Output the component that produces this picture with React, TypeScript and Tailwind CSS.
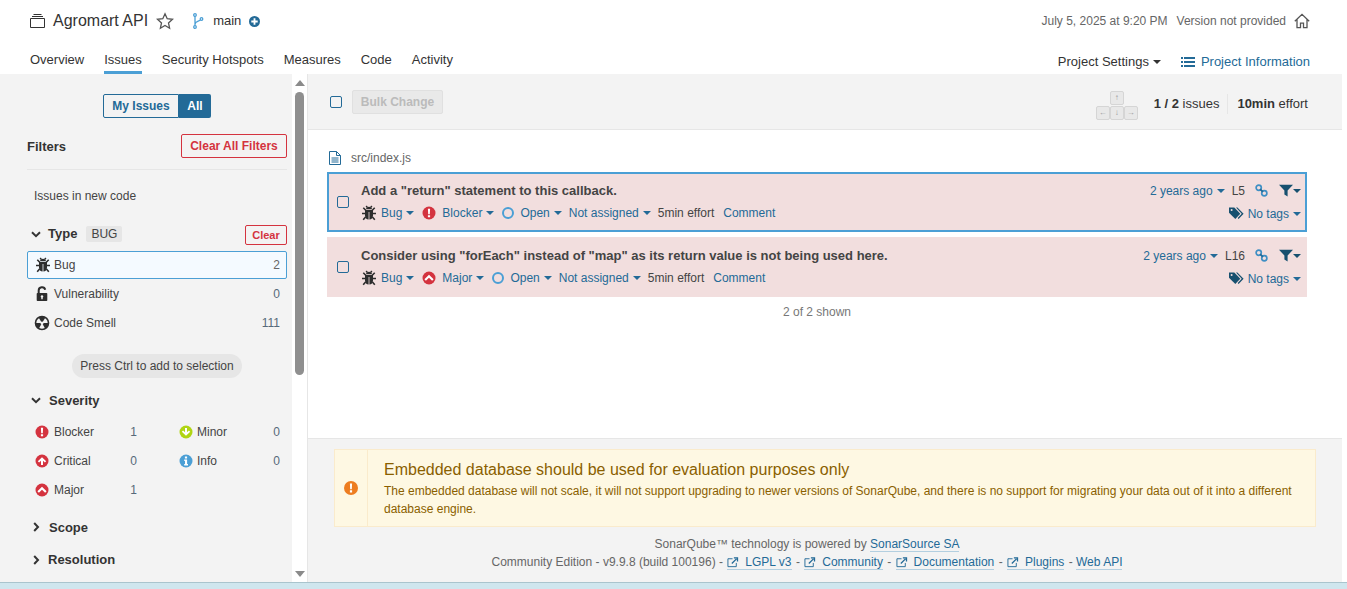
import React from 'react';

const BLUE = '#236a97';

function BugIcon() {
  return (
    <svg viewBox="0 0 16 16" className="w-4 h-4 shrink-0" fill="#2d2d2d">
      <path d="M5 4.2C5.3 2.6 6.500 1.800 8 1.800s2.700.8 3 2.400z" />
      <path d="M4 5h8v5.400c0 2.400-1.600 4-3.600 4.200V7h-.8v7.600C5.600 14.400 4 12.800 4 10.400z" />
      <path d="M2.300 2.800l2.400 2.500M13.700 2.800l-2.400 2.500M1 8.500h3M15 8.500h-3M2.200 14.800l2.400-2.800M13.800 14.800L11.400 12M5.200 1l1 1.400M10.800 1l-1 1.400" stroke="#2d2d2d" strokeWidth="1.600" fill="none" />
    </svg>
  );
}

function LockIcon() {
  return (
    <svg viewBox="0 0 16 16" className="w-4 h-4 shrink-0" fill="#2d2d2d">
      <path d="M3.500 7h9a.8.8 0 0 1 .8.8v6.400a.8.8 0 0 1-.8.8h-9a.8.8 0 0 1-.8-.8V7.800a.8.8 0 0 1 .8-.8zm4.500 2.200a1.300 1.300 0 0 0-.7 2.400v1.700h1.400v-1.700A1.300 1.300 0 0 0 8 9.200z" fillRule="evenodd" />
      <path d="M4.700 7V4.600a3.300 3.300 0 0 1 6.500-.9" stroke="#2d2d2d" strokeWidth="2" fill="none" />
    </svg>
  );
}

function SmellIcon() {
  return (
    <svg viewBox="0 0 16 16" className="w-4 h-4 shrink-0">
      <circle cx="8" cy="8" r="6.500" fill="none" stroke="#2d2d2d" strokeWidth="1.600" />
      <path d="M8 8L4.600 2.600A6.300 6.300 0 0 1 11.400 2.600z" fill="#2d2d2d" />
      <path d="M8 8h6.300a6.300 6.300 0 0 1-3.200 5.500z" fill="#2d2d2d" />
      <path d="M8 8H1.700a6.300 6.300 0 0 0 3.200 5.500z" fill="#2d2d2d" />
      <circle cx="8" cy="8" r="1.500" fill="#f3f3f3" />
    </svg>
  );
}

function SeverityIcon({ kind }: { kind: string }) {
  const color = kind === 'minor' ? '#b0d513' : kind === 'info' ? '#4b9fd5' : '#d4333f';
  return (
    <svg viewBox="0 0 14 14" className="w-[14px] h-[14px] shrink-0">
      <circle cx="7" cy="7" r="6.500" fill={color} />
      {kind === 'blocker' && <path d="M5.900 2.800h2.200l-.3 5.400H6.200zM5.900 9.200h2.200v2H5.900z" fill="#fff" />}
      {kind === 'critical' && <path d="M7 3.200l4.200 4.100-1.300 1.300-1.900-1.800v4.200H6V6.800L4.100 8.600 2.800 7.300z" fill="#fff" />}
      {kind === 'major' && <path d="M7 3.800l4.600 4.400-1.500 1.500L7 6.800 3.900 9.700 2.400 8.200z" fill="#fff" />}
      {kind === 'minor' && <path d="M7 10.800L2.800 6.700l1.300-1.300L6 7.200V3h2v4.200l1.900-1.800 1.300 1.300z" fill="#fff" />}
      {kind === 'info' && <path d="M5.900 2.600h2.200v2H5.900zM5.200 5.600h2.900v4.400h.9v1.400H5.200V10h.8V7H5.200z" fill="#fff" />}
    </svg>
  );
}

function Caret({ color = 'currentColor', className = 'ml-1' }: { color?: string; className?: string }) {
  return (
    <svg viewBox="0 0 8 4" className={`w-2 h-1 shrink-0 ${className}`}>
      <path d="M0 0h8L4 4z" fill={color} />
    </svg>
  );
}

function ChevronDown() {
  return (
    <svg viewBox="0 0 10 7" className="w-[10px] h-[7px] shrink-0">
      <path d="M1 1.300l4 3.800 4-3.800" fill="none" stroke="#333" strokeWidth="2" />
    </svg>
  );
}

function ChevronRight() {
  return (
    <svg viewBox="0 0 7 10" className="w-[7px] h-[10px] shrink-0">
      <path d="M1.200 1l3.800 4-3.800 4" fill="none" stroke="#333" strokeWidth="2" />
    </svg>
  );
}

function Checkbox() {
  return <div className="w-3 h-3 shrink-0 rounded-[2px] border border-[#236a97] bg-transparent" />;
}

function ExternalIcon() {
  return (
    <svg viewBox="0 0 14 12" className="w-[13px] h-[12px] mr-[5px] inline-block align-[-2px]">
      <path d="M6 2.500H1v8.500h9V7" fill="none" stroke="#236a97" strokeWidth="1" />
      <path d="M5.200 7.600l5-5M7.400 1.600h3.900v3.900" fill="none" stroke="#236a97" strokeWidth="1.400" />
    </svg>
  );
}

function FacetHeader({ title, open = true, gap = 'gap-[7px]' }: { title: string; open?: boolean; gap?: string }) {
  return (
    <div className={`flex items-center ${gap} text-[13px] font-bold text-[#333]`}>
      <div className="w-[14px] pl-[4px] flex justify-center">{open ? <ChevronDown /> : <ChevronRight />}</div>
      <span>{title}</span>
    </div>
  );
}

function FacetRow({ icon, label, count, iconClass = '' }: { icon: React.ReactNode; label: string; count: string; iconClass?: string }) {
  return (
    <div className="h-[29px] flex items-center pl-[7px] pr-[7px]">
      <div className={`w-[20px] flex items-center ${iconClass}`}>{icon}</div>
      <span className="text-xs text-[#444]">{label}</span>
      <span className="ml-auto text-xs text-[#56697a]">{count}</span>
    </div>
  );
}

function Sidebar() {
  return (
    <div className="w-[292px] shrink-0 bg-[#f3f3f3] pl-[27px] pr-[5px] overflow-hidden">
      <div className="flex justify-center pt-5">
        <div className="flex text-xs font-bold h-6">
          <div className="w-[76px] flex items-center justify-center border border-[#236a97] rounded-l-[2px] text-[#236a97]">My Issues</div>
          <div className="w-[32px] flex items-center justify-center bg-[#236a97] rounded-r-[2px] text-white">All</div>
        </div>
      </div>
      <div className="mt-4 flex items-center justify-between pb-[11px] border-b border-[#e6e6e6]">
        <span className="text-[13px] font-bold text-[#333] mt-px">Filters</span>
        <div className="w-[106px] h-6 flex items-center justify-center border border-[#d4333f] rounded-[2px] text-xs font-semibold text-[#d4333f]">Clear All Filters</div>
      </div>
      <div className="mt-[18px] pl-[7px] text-xs text-[#444]">Issues in new code</div>
      <div className="mt-[21px] flex items-center justify-between h-5">
        <div className="flex items-center -mt-[2px]">
          <FacetHeader title="Type" />
          <span className="ml-[9px] h-4 px-[5px] flex items-center rounded-[2px] bg-[#e6e6e6] text-xs text-[#444]">BUG</span>
        </div>
        <div className="w-[42px] h-5 flex items-center justify-center border border-[#d4333f] rounded-[2px] text-[11px] font-semibold text-[#d4333f]">Clear</div>
      </div>
      <div className="mt-[6px] border border-[#4b9fd5] rounded-[2px] bg-[#f4faff]">
        <div className="h-[26px] flex items-center pl-[7px] pr-[6px]">
          <div className="w-[19px] flex items-center"><BugIcon /></div>
          <span className="text-xs text-[#444]">Bug</span>
          <span className="ml-auto text-xs text-[#666]">2</span>
        </div>
      </div>
      <div>
        <FacetRow icon={<LockIcon />} label="Vulnerability" count="0" />
        <FacetRow icon={<SmellIcon />} label="Code Smell" count="111" />
      </div>
      <div className="mt-[17px] flex justify-center">
        <div className="w-[170px] h-6 flex items-center justify-center rounded-full bg-[#e6e6e6] text-xs text-[#444]">Press Ctrl to add to selection</div>
      </div>
      <div className="mt-[13px]">
        <FacetHeader title="Severity" gap="gap-2" />
      </div>
      <div className="mt-[7px] grid grid-cols-[117px_1fr] gap-x-[26px]">
        <div>
          <FacetRow icon={<SeverityIcon kind="blocker" />} label="Blocker" count="1" iconClass="pl-px" />
          <FacetRow icon={<SeverityIcon kind="critical" />} label="Critical" count="0" iconClass="pl-px" />
          <FacetRow icon={<SeverityIcon kind="major" />} label="Major" count="1" iconClass="pl-px" />
        </div>
        <div>
          <FacetRow icon={<SeverityIcon kind="minor" />} label="Minor" count="0" iconClass="pl-[2px]" />
          <FacetRow icon={<SeverityIcon kind="info" />} label="Info" count="0" iconClass="pl-[2px]" />
        </div>
      </div>
      <div className="mt-[13px]">
        <FacetHeader title="Scope" open={false} gap="gap-2" />
      </div>
      <div className="mt-[13px]">
        <FacetHeader title="Resolution" open={false} />
      </div>
    </div>
  );
}

function SideScroll() {
  return (
    <div className="w-[16px] shrink-0 flex bg-white">
      <div className="w-[15px] flex flex-col items-center pt-[6px] pb-[5px]">
        <div className="w-0 h-0 border-x-[5px] border-x-transparent border-b-[6px] border-b-[#8a8a8a]" />
        <div className="mt-[6px] w-[9px] h-[283px] rounded-[5px] bg-[#8f8f8f]" />
        <div className="mt-auto w-0 h-0 border-x-[5px] border-x-transparent border-t-[6px] border-t-[#8a8a8a]" />
      </div>
      <div className="w-px bg-[#e6e6e6]" />
    </div>
  );
}

function Key({ children }: { children: string }) {
  return (
    <div className="w-[14px] h-[14px] flex items-center justify-center bg-[#e8e8e8] border border-[#d5d5d5] rounded-[2px] text-[8px] text-[#999]">{children}</div>
  );
}

function Toolbar() {
  return (
    <div className="h-[56px] shrink-0 bg-[#f3f3f3] border-b border-[#e6e6e6] flex items-center pl-[22px] pr-[34px]">
      <Checkbox />
      <div className="ml-[10px] mt-px w-[91px] h-6 flex items-center justify-center bg-[#e9e9e9] border border-[#e0e0e0] rounded-[2px] text-xs font-bold text-[#bbb]">Bulk Change</div>
      <div className="ml-auto mt-[7px] flex flex-col items-center gap-px">
        <Key>↑</Key>
        <div className="flex">
          <Key>←</Key>
          <Key>↓</Key>
          <Key>→</Key>
        </div>
      </div>
      <div className="ml-4 mt-1 text-[13px] text-[#333] whitespace-nowrap"><b>1 / 2</b> issues</div>
      <div className="ml-2 mt-1 h-5 w-px bg-[#e6e6e6]" />
      <div className="ml-[9px] mt-1 text-[13px] text-[#333] whitespace-nowrap"><b>10min</b> effort</div>
    </div>
  );
}

function LinkIcon() {
  return (
    <svg viewBox="0 0 14 14" className="w-[13px] h-[13px] shrink-0">
      <circle cx="4" cy="4" r="2.800" fill="none" stroke="#3f8fc4" strokeWidth="1.800" />
      <circle cx="10" cy="10" r="2.800" fill="none" stroke="#3f8fc4" strokeWidth="1.800" />
      <path d="M5.500 5.500l3 3" stroke="#236a97" strokeWidth="1.800" />
    </svg>
  );
}

function FilterIcon() {
  return (
    <svg viewBox="0 0 14 13" className="w-[14px] h-[13px] shrink-0">
      <path d="M0 .8h14L8.600 6.500v6L5.400 10.500v-4z" fill="#17506f" />
    </svg>
  );
}

function TagIcon() {
  return (
    <svg viewBox="0 0 15 13" className="w-[15px] h-[13px] shrink-0">
      <path d="M0 .5h5.300l6 6.300-5 5.200L0 5.800z" fill="#17506f" />
      <path d="M7 .5h1.400l6.200 6.300-5 5.200-.9-.9 4-4.300z" fill="#17506f" />
      <circle cx="2.600" cy="3" r="1" fill="#f2dede" />
    </svg>
  );
}

function Issue({ title, severity, sevLabel, line, selected }: { title: string; severity: React.ReactNode; sevLabel: string; line: string; selected?: boolean }) {
  return (
    <div className={`h-[60px] bg-[#f2dede] flex items-center ${selected ? 'border-2 border-[#4b9fd5] pl-2 pr-1' : 'pl-[10px] pr-[6px]'}`}>
      <Checkbox />
      <div className="ml-3 flex-1 min-w-0">
        <div className="text-[13px] font-bold text-[#444] leading-4">{title}</div>
        <div className="mt-[6px] flex items-center text-xs text-[#236a97] leading-4">
          <BugIcon />
          <span className="ml-[4px]">Bug</span>
          <Caret color={BLUE} />
          <div className="ml-[8px] flex items-center">{severity}</div>
          <span className="ml-[6px]">{sevLabel}</span>
          <Caret color={BLUE} />
          <div className="ml-[8px] w-3 h-3 rounded-full border-2 border-[#4b9fd5]" />
          <span className="ml-[6px]">Open</span>
          <Caret color={BLUE} />
          <span className="ml-[7px]">Not assigned</span>
          <Caret color={BLUE} />
          <span className="ml-[7px] text-[#444]">5min effort</span>
          <span className="ml-[9px]">Comment</span>
        </div>
      </div>
      <div className="shrink-0 flex flex-col items-end">
        <div className="flex items-center h-4 text-xs text-[#236a97]">
          <span>2 years ago</span>
          <Caret color={BLUE} />
          <span className="ml-[7px] text-[#444]">{line}</span>
          <div className="ml-[10px]"><LinkIcon /></div>
          <div className="ml-[11px] flex items-center"><FilterIcon /><Caret color="#17506f" className="ml-0" /></div>
        </div>
        <div className="mt-[7px] flex items-center h-4 text-xs text-[#236a97]">
          <TagIcon />
          <span className="ml-[4px]">No tags</span>
          <Caret color={BLUE} />
        </div>
      </div>
    </div>
  );
}

function FooterLink({ children, external }: { children: string; external?: boolean }) {
  return (
    <span className={`border-b border-[#b3cfe0] text-[#236a97] ${external ? 'mx-px' : ''}`}>
      {external && <ExternalIcon />}
      {children}
    </span>
  );
}

function Footer() {
  return (
    <div className="h-[144px] shrink-0 bg-[#f3f3f3] border-t border-[#e6e6e6] pt-[10px] pl-[26px] pr-[26px]">
      <div className="h-[78px] flex bg-[#fef8e3] border border-[#faebcc]">
        <div className="w-[33px] shrink-0 flex items-center justify-center border-r border-[#faebcc]">
          <svg viewBox="0 0 14 14" className="w-[14px] h-[14px]">
            <circle cx="7" cy="7" r="7" fill="#ed7d20" />
            <path d="M5.900 2.600h2.200l-.3 5.600H6.200zM5.900 9.200h2.200v2.200H5.900z" fill="#fff" />
          </svg>
        </div>
        <div className="pl-4 pr-4 pt-[10px] text-[#8a5f00]">
          <div className="text-base leading-[20px]">Embedded database should be used for evaluation purposes only</div>
          <div className="mt-[2px] text-xs leading-[18px]">
            The embedded database will not scale, it will not support upgrading to newer versions of SonarQube, and there is no support for migrating your data out of it into a different database engine.
          </div>
        </div>
      </div>
      <div className="mt-[8px] pr-[36px] text-center text-xs leading-[18px] text-[#666]">
        <div>SonarQube™ technology is powered by <FooterLink>SonarSource SA</FooterLink></div>
        <div>
          Community Edition - v9.9.8 (build 100196) - <FooterLink external>LGPL v3</FooterLink> - <FooterLink external>Community</FooterLink> - <FooterLink external>Documentation</FooterLink> - <FooterLink external>Plugins</FooterLink> - <FooterLink>Web API</FooterLink>
        </div>
      </div>
    </div>
  );
}

export default function App() {
  return (
    <div className="h-[589px] overflow-hidden bg-white flex flex-col font-['Liberation_Sans',Arial,sans-serif]">
      {/* шапка проекта */}
      <div className="h-[74px] shrink-0 flex flex-col pl-[30px] pr-[37px]">
        <div className="flex items-center h-[42px]">
          <svg viewBox="0 0 15 14" className="w-[15px] h-[14px] shrink-0" fill="none" stroke="#333" strokeWidth="1">
            <path d="M.5 4.500h14v9H.500zM2 2.500h11M3.500.5h8" />
          </svg>
          <span className="ml-2 text-base text-[#333]">Agromart API</span>
          <svg viewBox="0 0 18 18" className="ml-2 w-[18px] h-[18px] shrink-0" fill="none" stroke="#555" strokeWidth="1.300">
            <path d="M9 1.800l2.200 4.900 5.300.6-4 3.600 1.100 5.300L9 13.500l-4.600 2.700 1.100-5.300-4-3.600 5.300-.6z" />
          </svg>
          <svg viewBox="0 0 12 16" className="ml-[18px] w-3 h-4 shrink-0" fill="none" stroke="#4b9fd5" strokeWidth="1.300">
            <circle cx="3" cy="2" r="1.300" />
            <circle cx="3" cy="14" r="1.300" />
            <circle cx="9.500" cy="6" r="1.300" />
            <path d="M3 3.300v9.400M8.500 7C6.500 8.500 3.500 8.500 3 11" />
          </svg>
          <span className="ml-[9px] text-[13px] text-[#333]">main</span>
          <svg viewBox="0 0 12 12" className="ml-[8px] w-[11px] h-[11px] shrink-0">
            <circle cx="6" cy="6" r="6" fill="#236a97" />
            <path d="M5 2.500h2V5h2.500v2H7v2.500H5V7H2.500V5H5z" fill="#fff" />
          </svg>
          <span className="ml-auto text-xs text-[#666]">July 5, 2025 at 9:20 PM</span>
          <span className="ml-[9px] text-xs text-[#666]">Version not provided</span>
          <svg viewBox="0 0 16 16" className="ml-[8px] w-4 h-4 shrink-0" fill="none" stroke="#555" strokeWidth="1.300">
            <path d="M.8 8.200L8 1.300l7.200 6.900M3 6.500v8.200h3.500v-4.500h3v4.500H13V6.500" />
          </svg>
        </div>
        <div className="flex items-start flex-1 text-[13px] text-[#333]">
          <div className="pt-[10px] leading-[15px]">Overview</div>
          <div className="ml-5 h-full border-b-[3px] border-[#4b9fd5] pt-[10px] leading-[15px]">Issues</div>
          <div className="ml-5 pt-[10px] leading-[15px]">Security Hotspots</div>
          <div className="ml-5 pt-[10px] leading-[15px]">Measures</div>
          <div className="ml-5 pt-[10px] leading-[15px]">Code</div>
          <div className="ml-5 pt-[10px] leading-[15px]">Activity</div>
          <div className="ml-auto flex items-center pt-3 leading-[15px]">
            <span>Project Settings</span>
            <Caret color="#333" />
            <svg viewBox="0 0 14 12" className="ml-[20px] w-[14px] h-3 shrink-0" fill={BLUE}>
              <path d="M0 1h2v2H0zM3 1h11v2H3zM0 5h2v2H0zM3 5h11v2H3zM0 9h2v2H0zM3 9h11v2H3z" />
            </svg>
            <span className="ml-[6px] text-[#236a97]">Project Information</span>
          </div>
        </div>
      </div>
      {/* основная часть */}
      <div className="flex-1 min-h-0 flex">
        <Sidebar />
        <SideScroll />
        <div className="flex-1 min-w-0 flex flex-col">
          <Toolbar />
          <div className="flex-1 min-h-0 pl-[19px] pr-[35px] pt-[20px]">
            <div className="flex items-center h-4 pl-[2px] mb-[6px]">
              <svg viewBox="0 0 12 14" className="w-3 h-[14px] shrink-0" fill="none" stroke="#236a97" strokeWidth="1">
                <path d="M.5.500h7l4 4v9H.500zM7.500.500v4h4M2.500 7h7M2.500 9h7M2.500 11h7" />
              </svg>
              <span className="ml-[10px] text-xs text-[#666]">src/index.js</span>
            </div>
            <Issue
              selected
              title={'Add a "return" statement to this callback.'}
              severity={<SeverityIcon kind="blocker" />}
              sevLabel="Blocker"
              line="L5"
            />
            <div className="mt-[5px]">
              <Issue
                title={'Consider using "forEach" instead of "map" as its return value is not being used here.'}
                severity={<SeverityIcon kind="major" />}
                sevLabel="Major"
                line="L16"
              />
            </div>
            <div className="mt-[8px] text-center text-xs text-[#777] leading-[15px]">2 of 2 shown</div>
          </div>
          <Footer />
        </div>
        <div className="w-[5px] shrink-0 bg-white" />
      </div>
      <div className="h-[7px] shrink-0 bg-[#cfe6ee] border-t border-[#a9c4cd]" />
    </div>
  );
}
